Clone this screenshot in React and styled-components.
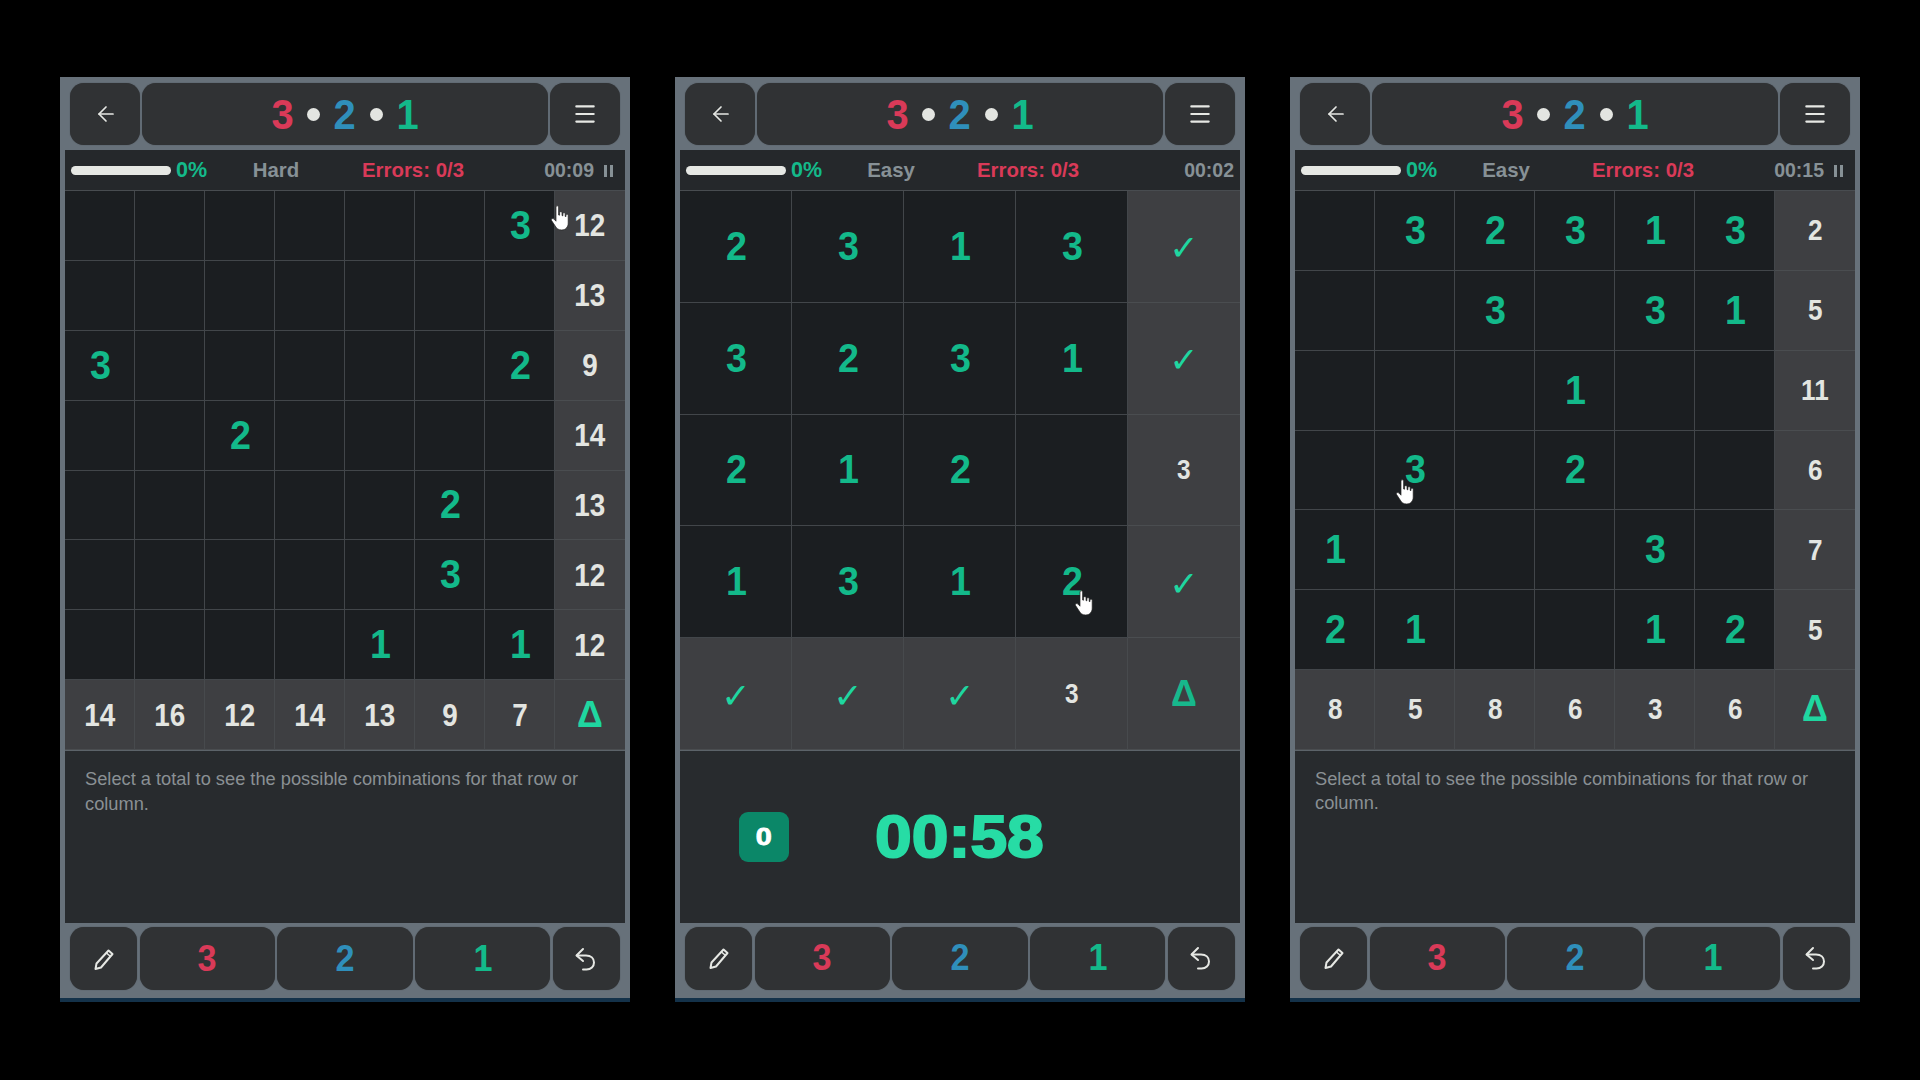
import React from 'react';
import styled, { createGlobalStyle } from 'styled-components';
import { ArrowLeft, Menu } from 'lucide-react';

const Global = createGlobalStyle`
  html, body { margin: 0; padding: 0; background: #000; }
  body { font-family: "Liberation Sans", Arial, sans-serif; }
`;
const Page = styled.div`
  width: 1920px; height: 1080px; box-sizing: border-box; background: #000;
  display: flex; gap: 45px; padding: 77px 60px 0; overflow: hidden;
`;
const Phone = styled.div`
  position: relative; width: 570px; height: 925px; box-sizing: border-box;
  display: flex; flex-direction: column; background: #67717a;
`;
const TopBar = styled.div`
  display: flex; gap: 2px; height: 73px; box-sizing: border-box; padding: 6px 10px 5px;
`;
const KeyButton = styled.div`
  flex: ${p => p.$grow ? '1 1 0' : `0 0 ${p.$w || 70}px`};
  display: flex; align-items: center; justify-content: center;
  background: #303234; border-radius: 14px; color: #e6e8e4;
  box-shadow: 0 0 1px #3a3e42;
`;
const BackArrow = styled(ArrowLeft)`margin-left: 2px;`;
const Title = styled.div`
  display: flex; align-items: center; gap: 13px; font-size: 42px; font-weight: 700; line-height: 1;
  padding-top: 1px;
`;
const Digit = styled.span`color: ${p => p.$c}; display: inline-block; transform: scaleX(.95);`;
const Dot = styled.span`width: 13px; height: 13px; border-radius: 50%; background: #e3e5e1;`;
const Body = styled.div`
  margin: 0 5px; display: flex; flex-direction: column;
`;
const Stats = styled.div`
  height: 41px; box-sizing: border-box; background: #25282b; display: grid;
  grid-template-columns: 150px 122px 152px 136px; align-items: center;
  font-size: 20.4px; font-weight: 700; color: #879196;
  border-bottom: 1px solid #484c50; padding-top: 1px;
`;
const Progress = styled.div`display: flex; align-items: center; gap: 5px; padding-left: 6px; color: #14b98a; font-size: 21.5px;`;
const Track = styled.div`width: 100px; height: 9px; border-radius: 5px; background: #e6e8e4;`;
const Center = styled.div`text-align: center; color: ${p => p.$c || 'inherit'}; white-space: nowrap;`;
const Timer = styled.div`display: flex; justify-content: flex-end; align-items: center; gap: 10px; padding-right: ${p => p.$pr}px; font-size: 19.5px; font-weight: 700;`;
const Pause = styled.span`
  display: inline-flex; gap: 3px;
  &::before, &::after { content: ""; width: 3px; height: 12px; background: #879196; }
`;
const Grid = styled.div`
  display: grid; grid-template-columns: repeat(${p => p.$n}, 1fr); grid-auto-rows: ${p => 559 / p.$n}px;
`;
const Cell = styled.div`
  box-sizing: border-box; display: flex; align-items: center; justify-content: center;
  padding-left: 1px;
  background: ${p => p.$total ? '#3e3f42' : '#1b1e21'};
  border-right: 1px solid ${p => p.$total ? '#474a4d' : '#42464a'};
  border-bottom: 1px solid ${p => p.$total ? '#4a4d50' : '#42464a'};
  color: ${p => p.$total ? '#e3e5e1' : '#13b98a'};
  font-size: ${p => p.$total ? p.$fs : 41}px; font-weight: 700; line-height: 1;
  &:nth-child(${p => p.$n}n) { border-right: 0; padding-left: 0; }
`;
const Num = styled.span`display: inline-block; transform: scaleX(${p => p.$sx});`;
const Check = styled.span`
  color: #1fd6a0; font-family: "DejaVu Sans", sans-serif; font-weight: 400; font-size: 35px; padding-top: 5px;
`;
const Delta = styled.span`color: ${p => p.$c}; font-size: 36px; font-weight: 700;`;
const Info = styled.div`
  height: 173px; box-sizing: border-box; background: #282b2e; border-top: 1px solid #5c6369;
  padding: 16px 20px; color: #8a9094; font-size: 18.25px; line-height: 24.5px;
`;
const Result = styled.div`
  height: 173px; box-sizing: border-box; background: #282b2e; border-top: 1px solid #5c6369;
  display: flex; align-items: center; gap: 86px; padding: 0 0 0 59px;
`;
const Badge = styled.div`
  width: 50px; height: 50px; border-radius: 9px; background: #0b8768; color: #fff;
  display: flex; align-items: center; justify-content: center; font-size: 24px; font-weight: 700;
`;
const BadgeNum = styled.span`display: inline-block; transform: scaleX(1.2); -webkit-text-stroke: .8px #fff;`;
const Clock = styled.div`
  color: #27dca5; font-size: 60px; font-weight: 700; line-height: 1;
  -webkit-text-stroke: 2px #27dca5; transform: scaleX(1.1); transform-origin: left center;
`;
const BottomBar = styled.div`
  display: flex; gap: 2.5px; height: 75px; box-sizing: border-box; padding: 4px 10px 8px;
  font-size: 36px; font-weight: 700;
`;
const Strip = styled.div`
  height: 4px; background: #14324a;
`;
const Hand = styled.svg`
  position: absolute; left: ${p => p.$x}px; top: ${p => p.$y}px; width: 20px; height: 27px;
`;

const HandIcon = ({ x, y }) => (
  <Hand $x={x} $y={y} viewBox="0 0 20 27">
    <path d="M5 2c0-1.6 2.6-1.6 2.6 0v8l1 .2V7.6c0-1.3 2.4-1.3 2.4 0v3l.9.2V8.6c0-1.2 2.3-1.2 2.3 0v2.8l.8.2v-1.5c0-1.2 2.2-1.2 2.2 0V18c0 4-2.5 7-6.5 7-3.4 0-5-1.5-6.5-4L.6 15.6c-.9-1.6 1.2-2.8 2.3-1.6L5 16.2V2z" fill="#fff" stroke="#222" strokeWidth=".7" />
  </Hand>
);

const Pencil = () => (
  <svg width="24" height="24" viewBox="0 0 24 24" fill="none" stroke="#e6e8e4" strokeWidth="2" strokeLinejoin="round">
    <path d="M16.5 3.5l4 3.5L9 20.5l-5.5 1.5 1-5.5z" />
    <path d="M14.5 6l4 3.5" strokeWidth="1.5" />
  </svg>
);
const Undo = () => (
  <svg width="24" height="26" viewBox="0 0 24 26" fill="none" stroke="#e6e8e4" strokeWidth="2" strokeLinecap="round" strokeLinejoin="round">
    <path d="M9 3L2.5 9.5 9 15" />
    <path d="M3 9.5h9c5 0 8 3 8 7s-3 7-7.5 7H9" />
  </svg>
);

const C = { red: '#d93a58', blue: '#2f8fbb', green: '#13b98a' };

function Board({ rows, n, fs, deltaColor }) {
  return (
    <Grid $n={n}>
      {rows.flatMap((row, r) => row.map((v, i) => {
        const total = r === rows.length - 1 || i === n - 1;
        let content = v === '' ? v : <Num $sx={total ? 0.87 : 0.92}>{v}</Num>;
        if (v === 'c') content = <Check>✓</Check>;
        if (v === 'd') content = <Delta $c={deltaColor}>Δ</Delta>;
        return <Cell key={`${r}-${i}`} $n={n} $total={total} $fs={fs}>{content}</Cell>;
      }))}
    </Grid>
  );
}

function Card({ level, time, paused, rows, n, fs, deltaColor, children, hand }) {
  return (
    <Phone>
      <TopBar>
        <KeyButton><BackArrow size={24} strokeWidth={1.7} /></KeyButton>
        <KeyButton $grow>
          <Title>
            <Digit $c={C.red}>3</Digit><Dot /><Digit $c={C.blue}>2</Digit><Dot /><Digit $c={C.green}>1</Digit>
          </Title>
        </KeyButton>
        <KeyButton><Menu size={26} strokeWidth={2} /></KeyButton>
      </TopBar>
      <Body>
        <Stats>
          <Progress><Track />0%</Progress>
          <Center>{level}</Center>
          <Center $c={C.red}>Errors: 0/3</Center>
          <Timer $pr={paused ? 12 : 6}>{time}{paused && <Pause />}</Timer>
        </Stats>
        <Board rows={rows} n={n} fs={fs} deltaColor={deltaColor} />
        {children}
      </Body>
      <BottomBar>
        <KeyButton $w={67}><Pencil /></KeyButton>
        <KeyButton $grow><Digit $c={C.red}>3</Digit></KeyButton>
        <KeyButton $grow><Digit $c={C.blue}>2</Digit></KeyButton>
        <KeyButton $grow><Digit $c={C.green}>1</Digit></KeyButton>
        <KeyButton $w={67}><Undo /></KeyButton>
      </BottomBar>
      <Strip />
      <HandIcon x={hand[0]} y={hand[1]} />
    </Phone>
  );
}

const e = '';
const hard = [
  [e,e,e,e,e,e,3,12],
  [e,e,e,e,e,e,e,13],
  [3,e,e,e,e,e,2,9],
  [e,e,2,e,e,e,e,14],
  [e,e,e,e,e,2,e,13],
  [e,e,e,e,e,3,e,12],
  [e,e,e,e,1,e,1,12],
  [14,16,12,14,13,9,7,'d'],
];
const small = [
  [2,3,1,3,'c'],
  [3,2,3,1,'c'],
  [2,1,2,e,3],
  [1,3,1,2,'c'],
  ['c','c','c',3,'d'],
];
const mid = [
  [e,3,2,3,1,3,2],
  [e,e,3,e,3,1,5],
  [e,e,e,1,e,e,11],
  [e,3,e,2,e,e,6],
  [1,e,e,e,3,e,7],
  [2,1,e,e,1,2,5],
  [8,5,8,6,3,6,'d'],
];
const hint = 'Select a total to see the possible combinations for that row or column.';

export default function App() {
  return (
    <Page>
      <Global />
      <Card level="Hard" time="00:09" paused rows={hard} n={8} fs={32} deltaColor="#1fd6a0" hand={[491, 128]}>
        <Info>{hint}</Info>
      </Card>
      <Card level="Easy" time="00:02" rows={small} n={5} fs={28} deltaColor="#17b88c" hand={[400, 513]}>
        <Result><Badge><BadgeNum>0</BadgeNum></Badge><Clock>00:58</Clock></Result>
      </Card>
      <Card level="Easy" time="00:15" paused rows={mid} n={7} fs={30} deltaColor="#1fd6a0" hand={[106, 402]}>
        <Info>{hint}</Info>
      </Card>
    </Page>
  );
}
